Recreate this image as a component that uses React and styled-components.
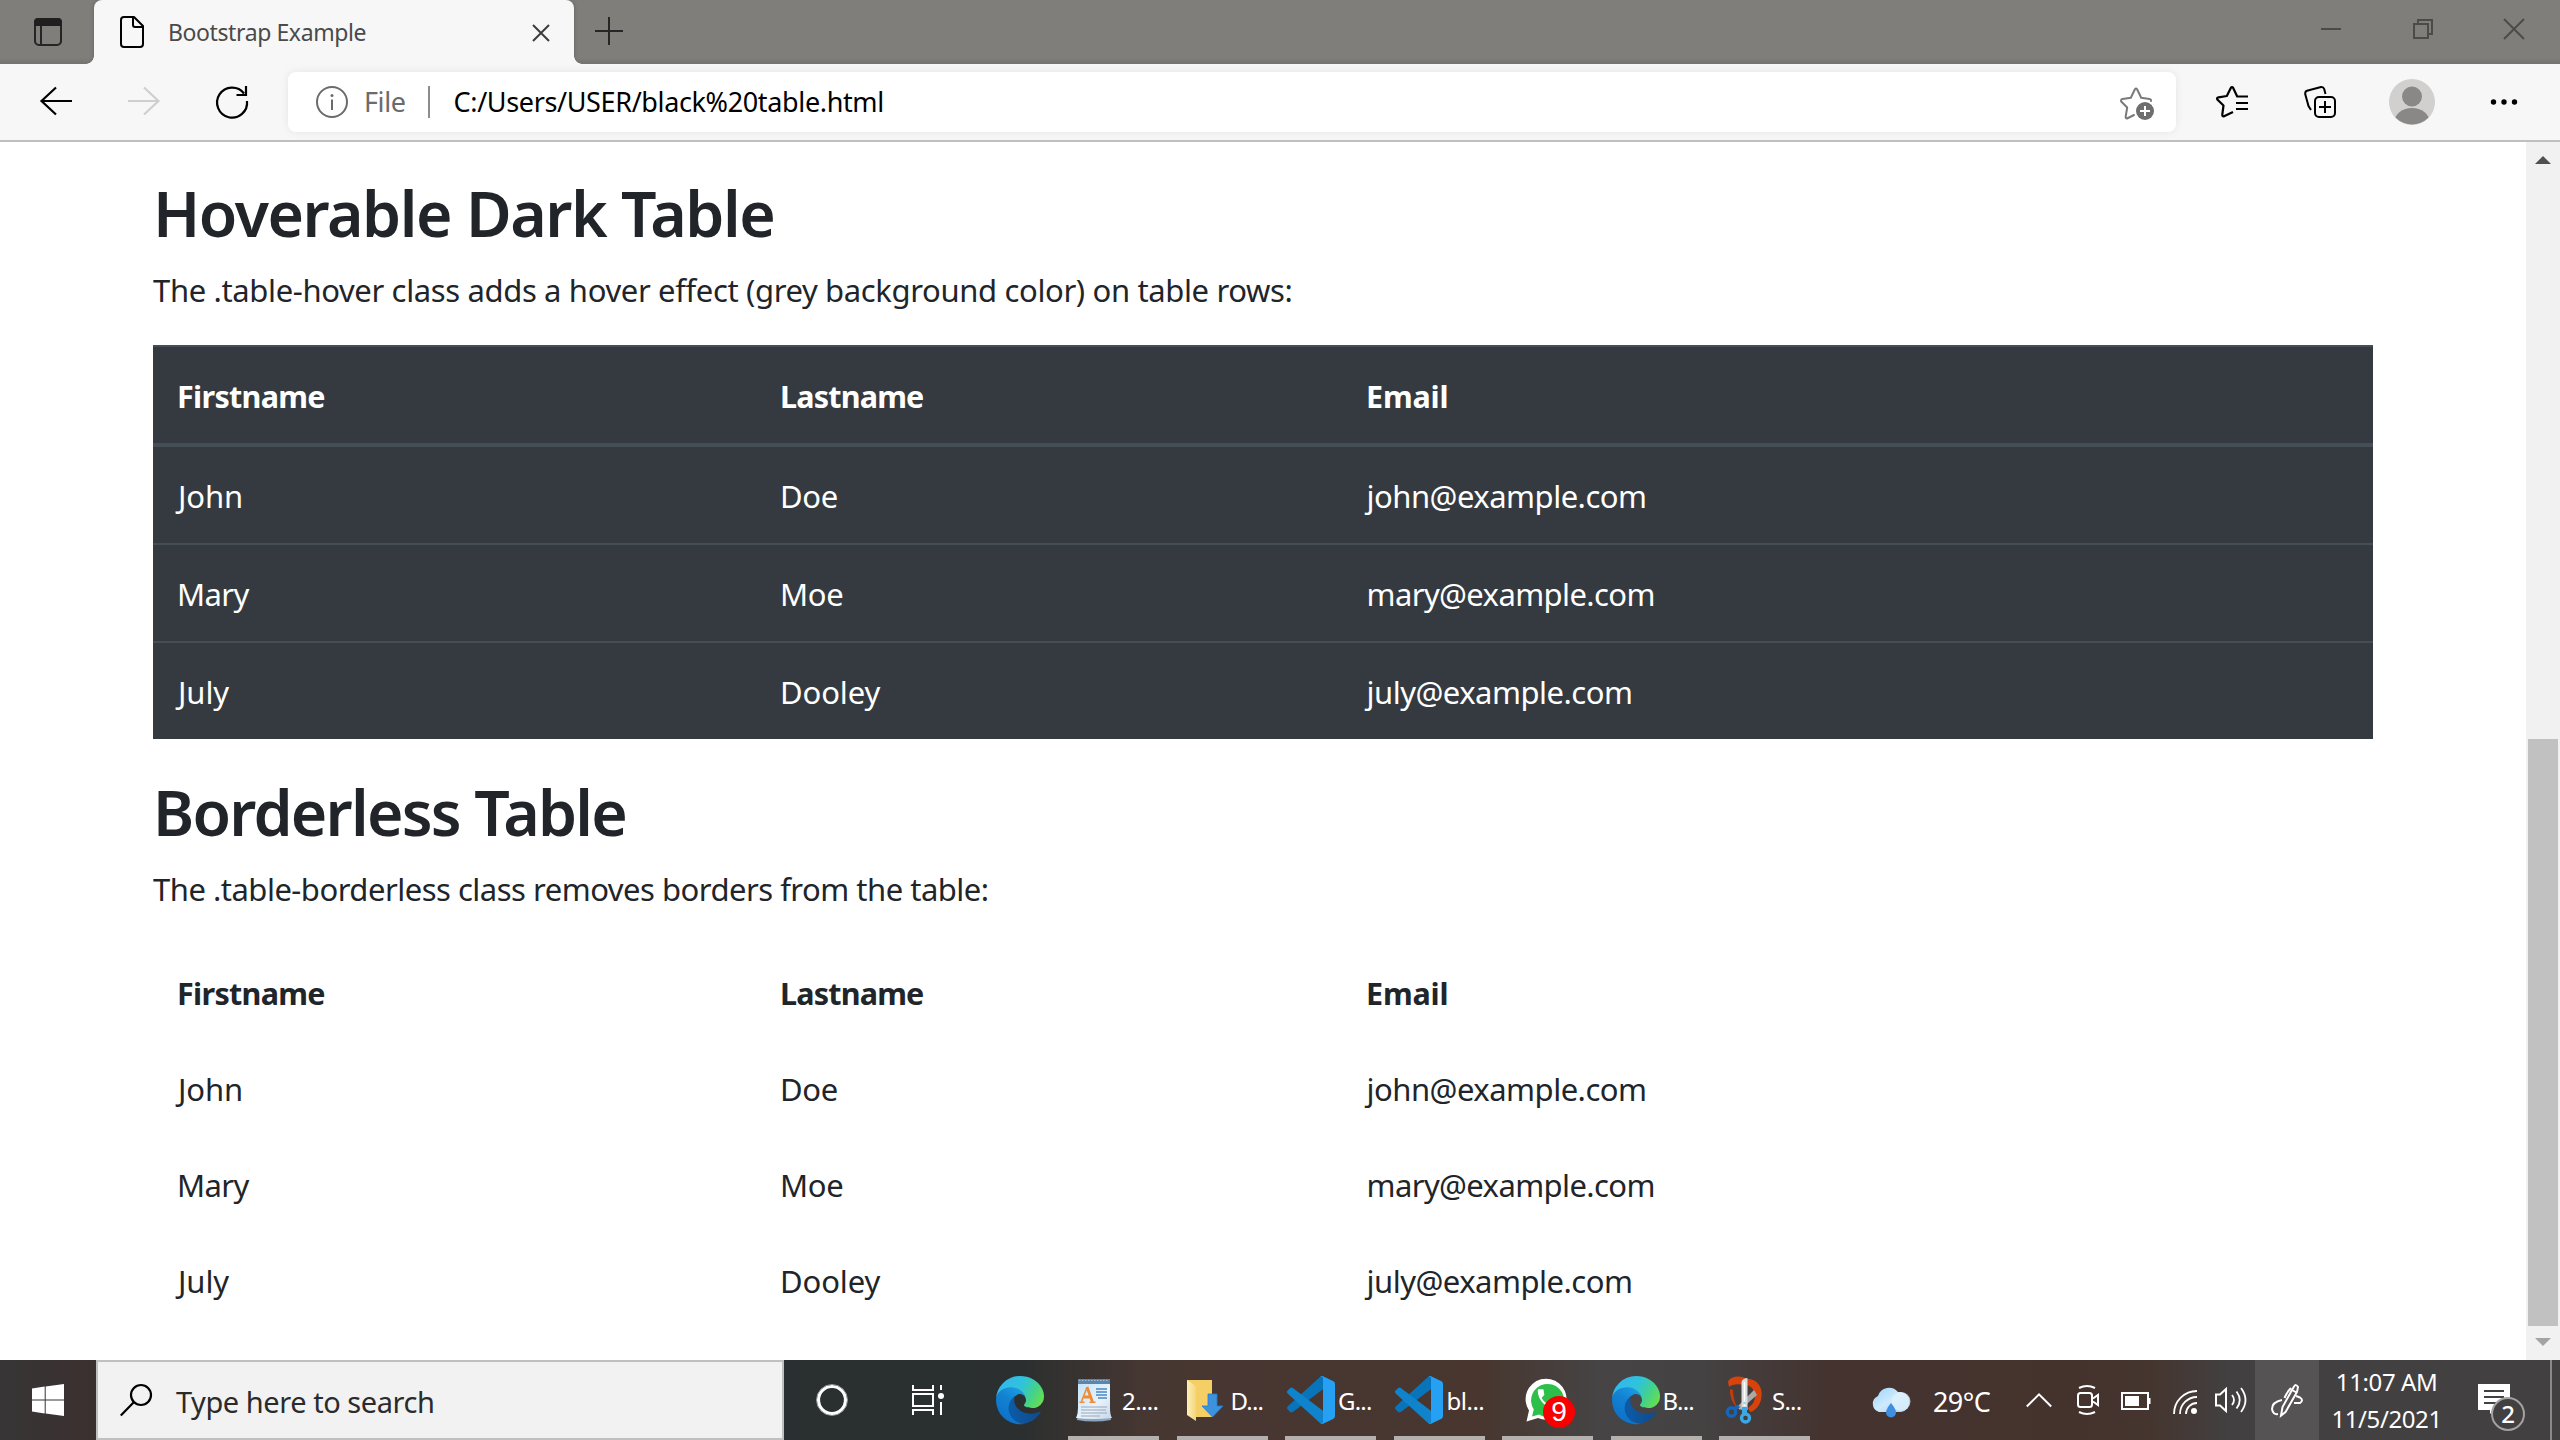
import React from "react";
import styled, { createGlobalStyle } from "styled-components";

const GlobalStyle = createGlobalStyle`
  *, *::before, *::after { box-sizing: border-box; }
  body {
    margin: 0;
    background: #fff;
    font-family: "Noto Sans", "Open Sans", sans-serif;
    overflow: hidden;
  }
  svg { display: block; overflow: visible; }
`;

/* ---------- shared ---------- */
const Window = styled.div`
  width: 2560px;
  height: 1440px;
  display: flex;
  flex-direction: column;
  overflow: hidden;
`;

const Slot = styled.span`
  display: block;
  flex: none;
  margin-left: ${(p) => p.$gap || 0}px;
  margin-top: ${(p) => p.$down || 0}px;
`;

const Label = styled.span`
  flex: none;
  white-space: nowrap;
  font-size: ${(p) => p.$size}px;
  letter-spacing: ${(p) => p.$track || 0}px;
  color: ${(p) => p.$color};
  margin-left: ${(p) => p.$gap || 0}px;
  padding-top: ${(p) => p.$down || 0}px;
  padding-bottom: ${(p) => p.$up || 0}px;
`;

const Icon = ({ w, h, gap, down, children, box }) => (
  <Slot $gap={gap} $down={down}>
    <svg width={w} height={h} viewBox={box || `0 0 ${w} ${h}`} fill="none">
      {children}
    </svg>
  </Slot>
);

/* ---------- browser chrome ---------- */
const TitleBar = styled.header`
  flex: none;
  height: 64px;
  display: flex;
  background: linear-gradient(#807e7b 0 90%, #757370);
`;

const TabActions = styled.div`
  width: 94px;
  display: flex;
  align-items: center;
`;

const Tab = styled.div`
  width: 480px;
  height: 64px;
  display: flex;
  align-items: center;
  background: #f7f7f7;
  border-radius: 8px 8px 0 0;
  position: relative;
  box-shadow: 0 0 4px rgba(0, 0, 0, 0.25);
  clip-path: inset(0 -8px 0 -8px);

  &::before,
  &::after {
    content: "";
    position: absolute;
    bottom: 0;
    width: 8px;
    height: 8px;
  }
  &::before {
    left: -8px;
    background: radial-gradient(circle at 0 0, transparent 7.5px, #f7f7f7 8px);
  }
  &::after {
    right: -8px;
    background: radial-gradient(circle at 100% 0, transparent 7.5px, #f7f7f7 8px);
  }
`;

const WindowControls = styled.div`
  display: flex;
  margin-left: auto;
  padding: 19px 36px 0 0;
  gap: 71.5px;
`;

const Toolbar = styled.nav`
  flex: none;
  height: 78px;
  display: flex;
  align-items: center;
  background: #f7f7f7;
  border-bottom: 2px solid #bfbfbf;
`;

const AddressBar = styled.div`
  width: 1888px;
  height: 60px;
  margin-left: 40px;
  display: flex;
  align-items: center;
  background: #fff;
  border-radius: 8px;
  box-shadow: 0 0 8px rgba(0, 0, 0, 0.08);
`;

const AddressDivider = styled.i`
  width: 2px;
  height: 32px;
  margin-left: 22px;
  background: #8c8c8c;
`;

const FavoriteButton = styled.span`
  margin-left: auto;
  margin-right: 22px;
  padding-top: 2px;
`;

/* ---------- page ---------- */
const Viewport = styled.div`
  flex: none;
  height: 1218px;
  display: flex;
  overflow: hidden;
`;

const Page = styled.main`
  width: 2526px;
  padding: 30px 153px 0;
  color: #212529;
`;

const Heading = styled.h2`
  margin: 0 0 14px;
  padding-top: 2px;
  font-size: 62.5px;
  line-height: 77px;
  font-weight: 600;
  letter-spacing: ${(p) => p.$track}px;
`;

const Lead = styled.p`
  margin: 0 0 31px;
  padding-top: 1px;
  font-size: 31px;
  line-height: 48px;
  letter-spacing: ${(p) => p.$track}px;
`;

const Table = styled.table`
  width: 2220px;
  border-collapse: separate;
  border-spacing: 0;
  table-layout: fixed;
  margin-bottom: 32px;
  color: ${(p) => (p.$dark ? "#fff" : "#212529")};
  background: ${(p) => (p.$dark ? "#343a40" : "transparent")};

  th, td {
    height: 96px;
    padding: 1px 24px 0;
    text-align: left;
    font-size: 31px;
    line-height: 48px;
  }
  th {
    font-weight: 700;
    font-size: 30.5px;
    ${(p) => p.$dark && "height: 102px; border-top: 2px solid #454d55; border-bottom: 4px solid #454d55;"}
  }
  tr + tr td {
    ${(p) => p.$dark && "height: 98px; border-top: 2px solid #454d55;"}
  }
`;

const CellText = styled.span`
  letter-spacing: ${(p) => p.$track}px;
  margin-left: ${(p) => p.$shift || 0}px;
`;

const Scrollbar = styled.aside`
  width: 34px;
  height: 1218px;
  display: flex;
  flex-direction: column;
  align-items: center;
  justify-content: space-between;
  padding: 14px 0;
  background: #f1f1f1;
`;

const Thumb = styled.div`
  width: 30px;
  height: 587px;
  margin-top: auto;
  margin-bottom: 12px;
  background: #c1c1c1;
`;

/* ---------- taskbar ---------- */
const Taskbar = styled.footer`
  flex: none;
  height: 80px;
  display: flex;
  background: linear-gradient(
    90deg,
    #373536 0,
    #3b302f 96px,
    #2a2f31 784px,
    #2b2f2f 1020px,
    #473732 1150px,
    #48362f 1480px,
    #464445 1600px,
    #444243 1700px,
    #44332f 1830px,
    #44322d 2080px,
    #45352f 2150px,
    #424041 2230px,
    #424041 2560px
  );
`;

const Start = styled.div`
  width: 96px;
  display: flex;
  align-items: center;
  padding-left: 32px;
`;

const SearchBox = styled.div`
  width: 688px;
  display: flex;
  align-items: center;
  padding-left: 22px;
  background: #f2f2f2;
  border: 2px solid #c0c0c0;
`;

const Group = styled.div`
  display: flex;
  align-items: center;
`;

const Apps = styled.div`
  display: flex;
  margin-left: 24px;
  gap: 17.5px;
`;

const AppButton = styled.div`
  width: 91px;
  height: 80px;
  display: flex;
  align-items: center;
  position: relative;
  border-bottom: 4px solid #b4b0ae;
  padding-top: 4px;
`;

const Badge = styled.span`
  position: absolute;
  left: 41px;
  top: 36px;
  width: 32px;
  height: 32px;
  border-radius: 50%;
  background: #f80000;
  color: #fff;
  font: 28px/31px "Liberation Sans", Arial, sans-serif;
  text-align: center;
`;

const PenTile = styled.div`
  width: 64px;
  height: 80px;
  margin-left: 8px;
  display: flex;
  align-items: center;
  background: #555354;
`;

const Clock = styled.time`
  width: 136px;
  padding-right: 1px;
  display: flex;
  flex-direction: column;
  justify-content: center;
  align-items: center;
  color: #fff;
  font-size: 24px;
  line-height: 37px;
  letter-spacing: -0.4px;
`;

const Notifications = styled.div`
  position: relative;
  width: 97px;
  padding: 24px 0 0 23px;
  border-right: 2px solid #8b898a;
`;

const Count = styled.span`
  position: absolute;
  left: 36px;
  top: 37px;
  width: 34px;
  height: 34px;
  border-radius: 50%;
  border: 2px solid #a3a1a2;
  background: #424041;
  color: #fff;
  font-size: 24px;
  font-weight: 500;
  line-height: 29px;
  text-align: center;
`;

/* ---------- logos ---------- */
const EdgeLogo = ({ id, gap, size = 48 }) => (
  <Icon w={size} h={size} gap={gap} box="0 0 256 256">
    <defs>
      <linearGradient id={`${id}a`} x1="0.2" y1="0.5" x2="1" y2="0.5">
        <stop offset="0" stopColor="#0c59a4" />
        <stop offset="1" stopColor="#114a8b" />
      </linearGradient>
      <linearGradient id={`${id}b`} x1="0.8" y1="0.1" x2="0.3" y2="1">
        <stop offset="0" stopColor="#1b9de2" />
        <stop offset="0.4" stopColor="#1382d2" />
        <stop offset="1" stopColor="#0b6fc9" />
      </linearGradient>
      <linearGradient id={`${id}c`} x1="0" y1="0.3" x2="1" y2="0.7">
        <stop offset="0" stopColor="#35b5ee" />
        <stop offset="0.45" stopColor="#2fc3dc" />
        <stop offset="0.75" stopColor="#45d18a" />
        <stop offset="1" stopColor="#66e04f" />
      </linearGradient>
    </defs>
    <path fill={`url(#${id}a)`} d="M231 190.5c-3.4 1.8-6.9 3.4-10.5 4.7a101.5 101.5 0 01-35.7 6.3c-47 0-88-32.3-88-73.8a31.3 31.3 0 0116.4-27.3c-42.6 1.8-53.5 46.2-53.5 72.1 0 73.6 67.8 81 82.4 81 7.9 0 19.8-2.3 27-4.6l1.3-.4a128.3 128.3 0 0066.6-52.8 4 4 0 00-6-5.2z" />
    <path fill={`url(#${id}b)`} d="M105.7 241.4c-8.9-5.5-16.6-12.8-22.7-21.3a80 80 0 0129.5-120c3.2-1.5 8.5-4.1 15.6-4 10.1.1 19.6 4.9 25.7 13a31.9 31.9 0 016.3 18.7c0-.2 24.5-79.6-80-79.6-43.9 0-80 41.6-80 78.2A130.2 130.2 0 0012.1 184a128 128 0 00156.4 67.1 75.5 75.5 0 01-62.8-9.7z" />
    <path fill={`url(#${id}c)`} d="M152.3 148.9c-.8 1-3.3 2.5-3.3 5.7 0 2.6 1.7 5.1 4.7 7.2 14.4 10 41.5 8.7 41.6 8.7 10.6 0 21.1-2.9 30.3-8.3A61.4 61.4 0 00256 109.3c.3-22.4-8-37.3-11.3-43.9C223.5 24 177.7 0 128 0A128 128 0 000 126.2c.5-36.5 36.8-66 80-66 3.5 0 23.5.3 42 10.1 16.3 8.6 24.9 19 30.8 29.3 6.2 10.7 7.3 24.1 7.3 29.5 0 5.3-2.7 13.3-7.8 19.8z" />
  </Icon>
);

const CodeLogo = ({ gap }) => (
  <Icon w={48} h={48} gap={gap} box="0 0 100 100">
    <path fill="#0a74ba" d="M96.46 10.8 75.86.88A6.23 6.23 0 0 0 68.75 2.08L1.3 63.58a4.17 4.17 0 0 0 0 6.17l5.51 5a4.17 4.17 0 0 0 5.32.24L93.36 13.37c2.73-2.07 6.64-.12 6.64 3.3v-.24c0-2.4-1.38-4.6-3.54-5.63Z" />
    <path fill="#0f83cc" d="m96.46 89.2-20.6 9.92a6.23 6.23 0 0 1-7.11-1.2L1.3 36.42a4.17 4.17 0 0 1 0-6.17l5.51-5a4.17 4.17 0 0 1 5.32-.24l81.23 61.62c2.73 2.07 6.64.12 6.64-3.3v.24c0 2.4-1.38 4.6-3.54 5.63Z" />
    <path fill="#26a0f2" d="M75.86 99.13a6.23 6.23 0 0 1-7.11-1.21c2.3 2.3 6.25.67 6.25-2.59V4.67c0-3.26-3.94-4.9-6.25-2.59A6.23 6.23 0 0 1 75.86.87l20.6 9.91A6.25 6.25 0 0 1 100 16.41v67.18c0 2.4-1.38 4.59-3.54 5.63l-20.6 9.91Z" />
  </Icon>
);

const WordPadLogo = () => (
  <Icon w={36} h={44} gap={8}>
    <defs>
      <linearGradient id="sheet" x1="0" y1="0" x2="1" y2="1">
        <stop offset="0" stopColor="#bfe0f8" />
        <stop offset="0.6" stopColor="#e8f3fc" />
        <stop offset="1" stopColor="#c4d6ea" />
      </linearGradient>
    </defs>
    <path d="M2 35 34 36 35 42 Q18 45 1 42Z" fill="#8ea3bd" />
    <path d="M2 1H34V30Q34 37 36 40Q18 42 0 40Q2 36 2 30Z" fill="url(#sheet)" />
    <path d="M2 1H34V6H2Z" fill="#5d84ab" />
    <path d="M3 2.5H33" stroke="#9fc0de" strokeWidth="1.2" strokeDasharray="1.5 1.5" />
    <path d="M5.500 23.500 11 9.500" stroke="#f08a35" strokeWidth="1.600" />
    <path d="M11 9 16.500 24M7.500 19h7" stroke="#f08a35" strokeWidth="2.800" />
    <path d="M3.500 24.200h5M13.500 24.200h6" stroke="#f08a35" strokeWidth="1.400" />
    <path d="M20 11h11M20 14h11M20 17h11M22 20h9" stroke="#4a86c5" strokeWidth="1.5" />
    <path d="M5 29h26M5 32h25M5 35h26M5 38h19" stroke="#9aa6b5" strokeWidth="1.2" />
  </Icon>
);

const FolderLogo = () => (
  <Icon w={36} h={42} gap={10}>
    <defs>
      <linearGradient id="flap" x1="0" x2="1">
        <stop offset="0" stopColor="#fff0b8" />
        <stop offset="1" stopColor="#f3d57c" />
      </linearGradient>
    </defs>
    <path d="M0 1H25V38H8L0 34Z" fill="#f5cf66" />
    <path d="M0 1 9 7V42L0 36Z" fill="url(#flap)" />
    <path d="M21 15h9v12h6L25.500 38 15 27h6Z" fill="#3c92dd" stroke="#2b7cc6" strokeWidth="0.8" />
  </Icon>
);

const WhatsAppLogo = () => (
  <Icon w={42} h={43} gap={24}>
    <path d="M.5 42.500 3 31.500A20.500 20.500 0 1 1 12 39Z" fill="#fff" />
    <path d="M6 37.500 7.800 30.500A16.500 16.500 0 1 1 13 35.500Z" fill="#2cbf4a" />
    <path transform="translate(8.500 7) scale(1.080)" fill="#fff" d="M6.600 10.800c1.400 2.800 3.800 5.100 6.600 6.600l2.200-2.200c.27-.27.67-.36 1-.24 1.100.37 2.300.57 3.600.57.55 0 1 .45 1 1V20c0 .55-.45 1-1 1C10.600 21 3 13.400 3 4c0-.55.45-1 1-1h3.500c.55 0 1 .45 1 1 0 1.250.2 2.450.57 3.570.11.35.03.74-.25 1.020z" />
  </Icon>
);

const SnipLogo = () => (
  <Icon w={38} h={48} gap={7}>
    <path d="M2 6C4 0 16-1 20 3C32 2 38 13 35 24Q32 34 24 36L22 32Q30 27 29 18Q27 9 18 9Q8 7 3 11Z" fill="#d8430c" />
    <path d="M4 13Q3 24 12 33Q7 24 7 14Z" fill="#c23b0c" />
    <path d="m28 14 3 5-17 15-3-3Z" fill="#a9a9a9" />
    <path d="M15.500 6Q17 2 21.500 2V34H15.500Z" fill="#d9dbdc" />
    <path d="M18.500 6V30" stroke="#fff" strokeWidth="1.500" />
    <path d="M16 31h5v8h-5Z" fill="#3aa7e6" />
    <circle cx="19.500" cy="42" r="4" stroke="#3aa7e6" strokeWidth="3.400" />
    <circle cx="5.500" cy="36" r="4.200" stroke="#1565b8" strokeWidth="3.400" />
    <path d="m8 33 5-3" stroke="#1565b8" strokeWidth="3.500" />
    <circle cx="18.500" cy="27" r="1.300" fill="#8fd0f5" />
  </Icon>
);

const people = [
  [["John", -0.1, 1], ["Doe", -0.3], ["john@example.com", -0.5, 0.5]],
  [["Mary", -0.6], ["Moe", -0.3], ["mary@example.com", -0.6, 0.5]],
  [["July", -0.1, 1], ["Dooley", -0.1], ["july@example.com", -0.5, 0.5]],
];

const DataTable = ({ dark }) => (
  <Table $dark={dark}>
    <colgroup>
      <col width="603" />
      <col width="586" />
      <col width="1031" />
    </colgroup>
    <thead>
      <tr>
        <th><CellText $track={-0.7}>Firstname</CellText></th>
        <th><CellText $track={-0.8}>Lastname</CellText></th>
        <th><CellText $track={-0.2}>Email</CellText></th>
      </tr>
    </thead>
    <tbody>
      {people.map((row) => (
        <tr key={row[0][0]}>
          {row.map(([text, track, shift]) => (
            <td key={text}><CellText $track={track} $shift={shift}>{text}</CellText></td>
          ))}
        </tr>
      ))}
    </tbody>
  </Table>
);

export default function App() {
  return (
    <Window>
      <GlobalStyle />
      <TitleBar>
        <TabActions>
          <Icon w={28} h={28} gap={34}>
            <rect x="1" y="1" width="26" height="26" rx="4" stroke="#262425" strokeWidth="2" />
            <path d="M0 8V4a4 4 0 0 1 4-4h20a4 4 0 0 1 4 4v4Z" fill="#201e1f" />
            <path d="M7 8V27" stroke="#262425" strokeWidth="2" />
          </Icon>
        </TabActions>
        <Tab>
          <Icon w={24} h={32} gap={26}>
            <path d="M4 1h10l9 9v18a3 3 0 0 1-3 3H4a3 3 0 0 1-3-3V4a3 3 0 0 1 3-3Z" stroke="#000" strokeWidth="2" strokeLinejoin="round" />
            <path d="M13 1v8a2 2 0 0 0 2 2h8" stroke="#000" strokeWidth="2" />
          </Icon>
          <Label $size={23} $track={-0.4} $gap={24} $up={1} $color="#4a4a4a">Bootstrap Example</Label>
          <Icon w={16} h={16} gap={167} down={2}>
            <path d="m0 0 16 16M16 0 0 16" stroke="#3c3c3c" strokeWidth="2" />
          </Icon>
        </Tab>
        <Group>
          <Icon w={28} h={28} gap={21} down={-2}>
            <path d="M14 0v28M0 14h28" stroke="#262626" strokeWidth="2" />
          </Icon>
        </Group>
        <WindowControls>
          <Icon w={20} h={20}>
            <path d="M0 10h20" stroke="#4c4b49" strokeWidth="2" />
          </Icon>
          <Icon w={20} h={20}>
            <path d="M1 5h14v14H1ZM5 5V1h14v14h-4" stroke="#4c4b49" strokeWidth="2" />
          </Icon>
          <Icon w={20} h={20}>
            <path d="m0 0 20 20M20 0 0 20" stroke="#4c4b49" strokeWidth="2" />
          </Icon>
        </WindowControls>
      </TitleBar>

      <Toolbar>
        <Icon w={32} h={28} gap={40} down={-3}>
          <path d="M16 .5 1.500 14 16 27.500M1.500 14H32" stroke="#000" strokeWidth="2.200" />
        </Icon>
        <Icon w={32} h={28} gap={56} down={-3}>
          <path d="M16 .5 30.500 14 16 27.500M30.500 14H0" stroke="#cfcfcf" strokeWidth="2.200" />
        </Icon>
        <Icon w={32} h={32} gap={56}>
          <path d="M31 15A15 15 0 1 1 28 7.500M30 0v9h-9.500" stroke="#000" strokeWidth="2.200" />
        </Icon>
        <AddressBar>
          <Icon w={32} h={32} gap={28}>
            <circle cx="16" cy="16" r="15" stroke="#6b6b6b" strokeWidth="2" />
            <path d="M16 13.500V24" stroke="#6b6b6b" strokeWidth="2" />
            <circle cx="16" cy="9.500" r="1.500" fill="#6b6b6b" />
          </Icon>
          <Label $size={27} $track={-0.4} $gap={16} $up={1} $color="#6b6b6b">File</Label>
          <AddressDivider />
          <Label $size={27} $track={-0.36} $gap={24} $up={1} $color="#000">C:/Users/USER/black%20table.html</Label>
          <FavoriteButton>
            <svg width="34" height="33" viewBox="0 0 34 33" fill="none">
              <path d="M14 28 7 31.500Q5.500 31.500 5.700 29.500L7.200 20.500 1.200 14.500Q.5 12.500 2.500 12L10.800 10.800 14.800 2.500Q16 .5 17.200 2.500L21.200 10.800 29.500 12Q31.500 12.500 31 14" stroke="#7a7a7a" strokeWidth="2" strokeLinecap="round" strokeLinejoin="round" />
              <circle cx="25" cy="24" r="9" fill="#6e6e6e" />
              <path d="M25 19v10M20 24h10" stroke="#fff" strokeWidth="2" />
            </svg>
          </FavoriteButton>
        </AddressBar>
        <Icon w={32} h={32} gap={40}>
          <path d="M17 26 8 30.300Q6 30.500 6.300 28.500L7.500 19.500 1.300 13.500Q.5 11.800 2.500 11.300L10.800 10 14.800 2Q16 .3 17.200 2L21.200 10.500H32M20 17h12M20 23h12" stroke="#000" strokeWidth="2.200" strokeLinejoin="round" />
        </Icon>
        <Icon w={32} h={32} gap={56}>
          <rect x="11" y="11" width="20" height="20" rx="4" stroke="#000" strokeWidth="2" />
          <path d="M21 15v12M15 21h12" stroke="#000" strokeWidth="2" />
          <path d="M7 24 4.500 20 1.200 8Q1 5.500 3 4.800L17 1Q19.500 .8 20.200 3L21.500 8" stroke="#000" strokeWidth="2" />
        </Icon>
        <Icon w={46} h={46} gap={53}>
          <defs>
            <clipPath id="face"><circle cx="23" cy="23" r="22.500" /></clipPath>
          </defs>
          <circle cx="23" cy="23" r="23" fill="#d2d0ce" />
          <circle cx="23" cy="17.500" r="10" fill="#8a8886" />
          <ellipse cx="23" cy="43" rx="17.500" ry="14" fill="#8a8886" clipPath="url(#face)" />
        </Icon>
        <Icon w={28} h={8} gap={55}>
          <circle cx="3.500" cy="4" r="2.700" fill="#000" />
          <circle cx="14" cy="4" r="2.700" fill="#000" />
          <circle cx="24.500" cy="4" r="2.700" fill="#000" />
        </Icon>
      </Toolbar>

      <Viewport>
        <Page>
          <Heading $track={-1.45}>Hoverable Dark Table</Heading>
          <Lead $track={-0.36}>
            The .table-hover class adds a hover effect (grey background color) on table rows:
          </Lead>
          <DataTable dark />
          <Heading $track={-1.75}>Borderless Table</Heading>
          <Lead $track={-0.5}>The .table-borderless class removes borders from the table:</Lead>
          <DataTable />
        </Page>
        <Scrollbar>
          <Icon w={16} h={8}><path d="M8 0 16 8H0Z" fill="#505050" /></Icon>
          <Thumb />
          <Icon w={16} h={8}><path d="M0 0H16L8 8Z" fill="#a3a3a3" /></Icon>
        </Scrollbar>
      </Viewport>

      <Taskbar>
        <Start>
          <Icon w={32} h={32}>
            <path d="M0 4.500 12.700 2.600V15.400H0ZM13.700 2.400 32 0V15.400H13.700ZM0 16.500H12.700V29.500L0 27.600ZM13.700 16.500H32V32L13.700 29.600Z" fill="#fff" />
          </Icon>
        </Start>
        <SearchBox>
          <Icon w={32} h={32}>
            <circle cx="21" cy="11" r="10" stroke="#000" strokeWidth="2.200" />
            <path d="M14 18 .8 31.500" stroke="#000" strokeWidth="2.200" />
          </Icon>
          <Label $size={29} $track={-0.45} $gap={24} $down={3} $color="#2b2b2b">Type here to search</Label>
        </SearchBox>
        <Group>
          <Icon w={32} h={32} gap={32}>
            <circle cx="16" cy="16" r="13.500" stroke="#fff" strokeWidth="3.200" />
            <circle cx="16" cy="16" r="15.500" stroke="#9a9c9d" strokeWidth="1" />
          </Icon>
          <Icon w={32} h={30} gap={64}>
            <path d="M1 0v5h20V0M1 9h20v12H1ZM1 30v-5h20v5M29 0v5M29 17v13" stroke="#fff" strokeWidth="2" />
            <circle cx="29" cy="11" r="3" fill="#fff" />
          </Icon>
          <EdgeLogo id="edgePinned" gap={52} />
        </Group>
        <Apps>
          <AppButton><WordPadLogo /><Label $size={24} $track={-0.6} $gap={10} $color="#fff">2....</Label></AppButton>
          <AppButton><FolderLogo /><Label $size={24} $track={-0.8} $gap={8} $color="#fff">D...</Label></AppButton>
          <AppButton><CodeLogo gap={2} /><Label $size={24} $track={-0.8} $gap={3} $color="#fff">G...</Label></AppButton>
          <AppButton><CodeLogo gap={1} /><Label $size={24} $track={-0.5} $gap={4} $color="#fff">bl...</Label></AppButton>
          <AppButton><WhatsAppLogo /><Badge>9</Badge></AppButton>
          <AppButton><EdgeLogo id="edgeOpen" gap={1} /><Label $size={24} $track={-0.8} $gap={3} $color="#fff">B...</Label></AppButton>
          <AppButton><SnipLogo /><Label $size={24} $track={-0.8} $gap={8} $color="#fff">S...</Label></AppButton>
        </Apps>
        <Group>
          <Icon w={42} h={31} gap={60} down={2}>
            <defs>
              <linearGradient id="cloud" x1="0" y1="0" x2="1" y2="1">
                <stop offset="0" stopColor="#9bd3fb" />
                <stop offset="0.5" stopColor="#cfeafd" />
                <stop offset="1" stopColor="#a9cdf0" />
              </linearGradient>
            </defs>
            <path d="M9 26a8.500 8.500 0 0 1-1-16A11.500 11.500 0 0 1 28 6 10 10 0 1 1 31 26Z" fill="url(#cloud)" />
            <circle cx="31" cy="15.500" r="9.500" fill="#e3f3fe" opacity="0.7" />
            <path d="M21 17q5 6 5 9.500a5 5 0 0 1-10 0Q16 23 21 17Z" fill="#3e8fe0" />
          </Icon>
          <Label $size={27} $track={-0.6} $gap={21} $down={2} $color="#fff">29°C</Label>
          <Icon w={26} h={14} gap={36}>
            <path d="M.8 13.500 13 1.300 25.200 13.500" stroke="#fff" strokeWidth="2" />
          </Icon>
          <Icon w={22} h={30} gap={25}>
            <rect x="1" y="8" width="14" height="14" rx="2.500" stroke="#fff" strokeWidth="2" />
            <path d="M16 13.500 21 10V20L16 16.500M2 3Q10-1 18 3M2 27Q10 31 18 27" stroke="#fff" strokeWidth="2" />
          </Icon>
          <Icon w={30} h={18} gap={22} down={2}>
            <path d="M1 1H27V17H1ZM28.500 6v6" stroke="#fff" strokeWidth="2" />
            <path d="M4 4H18V14H4Z" fill="#fff" />
          </Icon>
          <Icon w={24} h={24} gap={22} down={4}>
            <path d="M1 24A23 23 0 0 1 24 1M7 24A17 17 0 0 1 24 7M13 24A11 11 0 0 1 24 13" stroke="#fff" strokeWidth="1.800" />
            <circle cx="21" cy="21" r="3" fill="#fff" />
          </Icon>
          <Icon w={32} h={28} gap={18}>
            <path d="M1 8.500H5L11 3V25L5 19.500H1Z" stroke="#fff" strokeWidth="2" />
            <path d="M17 9Q21 14 17 19M21.500 5.500Q28 14 21.500 22.500M26 2Q35 14 26 26" stroke="#fff" strokeWidth="1.800" />
          </Icon>
          <PenTile>
            <Icon w={32} h={32} gap={16}>
              <path d="M10 31.500 11.500 23 23 2.500Q25-.5 27 3L26 8 14.500 28ZM22 6.500 25.500 8.500M20 4Q16 8 13.500 14" stroke="#fff" strokeWidth="2" />
              <path d="M11 16Q1 18 1 25Q2 31 7 30M23 19H29Q33 16 29 13.500L25 12" stroke="#fff" strokeWidth="2" />
            </Icon>
          </PenTile>
        </Group>
        <Clock>
          <span>11:07 AM</span>
          <span>11/5/2021</span>
        </Clock>
        <Notifications>
          <Icon w={32} h={34}>
            <path d="M0 0H32V26H16L12 30V26H0Z" fill="#fff" />
            <path d="M6 7H26M6 13H26M6 19H26" stroke="#424041" strokeWidth="2" />
          </Icon>
          <Count>2</Count>
        </Notifications>
      </Taskbar>
    </Window>
  );
}
